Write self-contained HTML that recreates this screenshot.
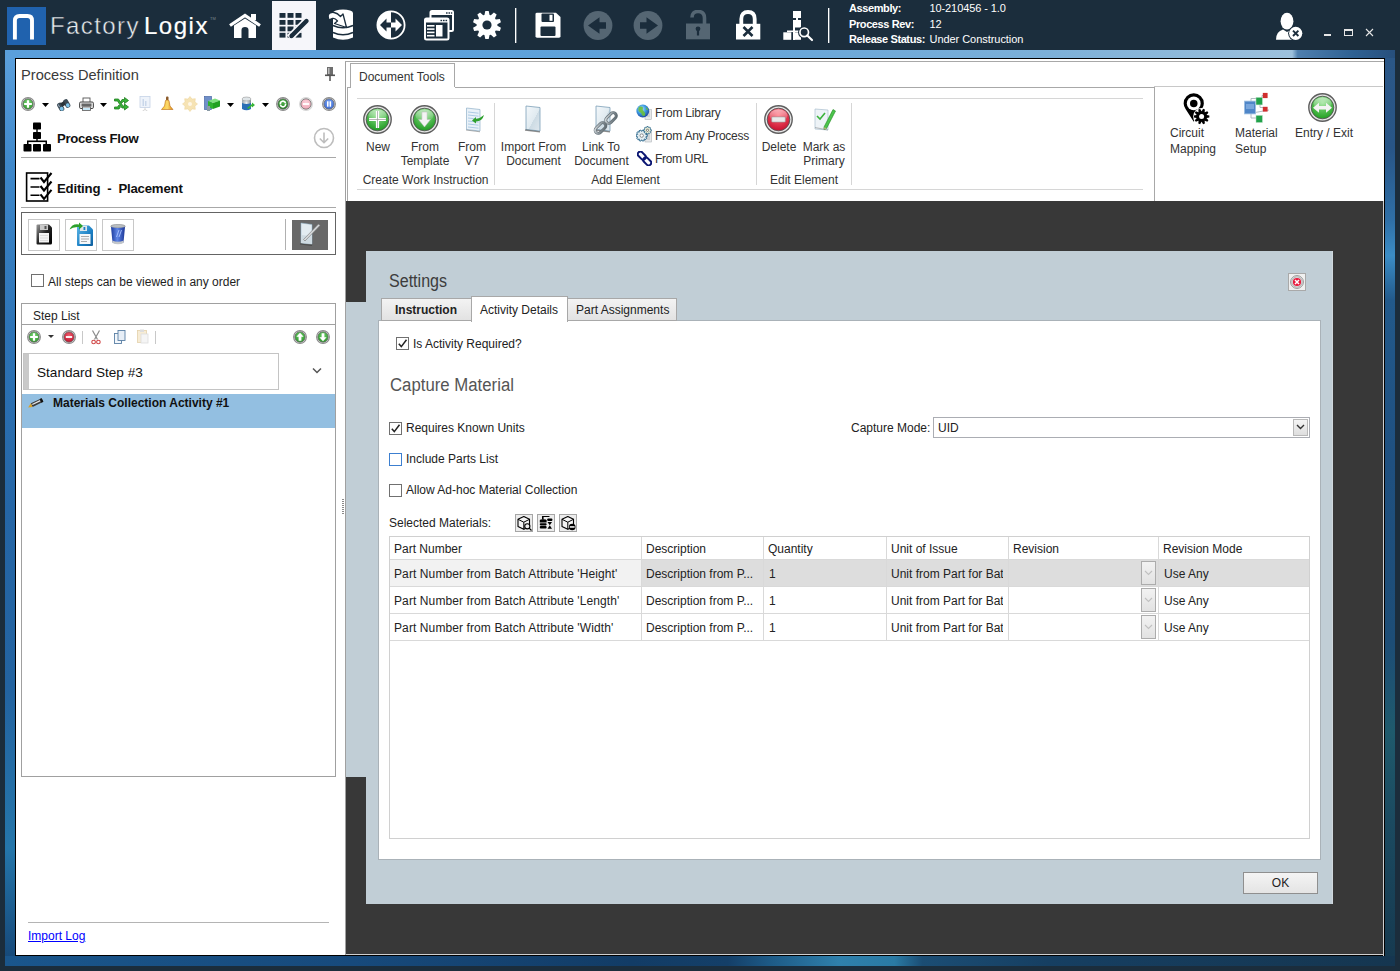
<!DOCTYPE html><html><head><meta charset="utf-8"><style>
*{box-sizing:border-box;margin:0;padding:0}
html,body{width:1400px;height:971px;overflow:hidden;background:#1b2d3c;font-family:"Liberation Sans",sans-serif;color:#000}
.a{position:absolute}
.t{position:absolute;white-space:nowrap;line-height:1}
#top{left:0;top:0;width:1400px;height:50px;background:#1b2d3c}
#frame{left:5px;top:50px;width:1390px;height:916px;background:linear-gradient(180deg,#5ba0dc 0%,#3f86c6 20%,#2a6aa6 50%,#1d5588 80%,#164676 100%)}
#win{left:15px;top:58px;width:1370px;height:898px;background:#fff;border:1px solid #000}
</style></head><body><div id="top" class="a">
  <div class="a" style="left:7px;top:7px;width:39px;height:38px;background:#2062ae"></div>
  <svg class="a" style="left:7px;top:7px" width="39" height="38" viewBox="0 0 39 38"><path d="M7.9 32.6 V13.5 Q7.9 9 12.5 9 H20.5 Q25 9 25 13.5 V32.6" fill="none" stroke="#fff" stroke-width="3.9"/></svg>
  <div class="t" style="left:50px;top:13.5px;font-size:24px;color:#e8ecee;letter-spacing:1.4px;-webkit-text-stroke:0.45px #1b2d3c">Factory</div><div class="t" style="left:144px;top:13.5px;font-size:24px;color:#fff;letter-spacing:1.5px;-webkit-text-stroke:0.2px #fff">Logix</div><div class="t" style="left:210px;top:17px;font-size:4px;color:#7c8890">TM</div>
  <div class="a" style="left:272px;top:1px;width:44px;height:49px;background:#f6f6fa"></div>
  <div class="a" style="left:515px;top:8px;width:1px;height:35px;background:#fff"></div><div class="a" style="left:516px;top:8px;width:1px;height:35px;background:rgba(255,255,255,0.35)"></div>
  <div class="a" style="left:828px;top:8px;width:1px;height:35px;background:#fff"></div><div class="a" style="left:829px;top:8px;width:1px;height:35px;background:rgba(255,255,255,0.35)"></div>
  <div class="t" style="left:849px;top:3px;font-size:11px;font-weight:bold;color:#fff;letter-spacing:-0.4px">Assembly:</div>
  <div class="t" style="left:849px;top:19px;font-size:11px;font-weight:bold;color:#fff;letter-spacing:-0.4px">Process Rev:</div>
  <div class="t" style="left:849px;top:34.3px;font-size:11px;font-weight:bold;color:#fff;letter-spacing:-0.4px">Release Status:</div>
  <div class="t" style="left:929.5px;top:3px;font-size:11px;color:#fff;letter-spacing:-0.1px">10-210456 - 1.0</div>
  <div class="t" style="left:929.5px;top:19px;font-size:11px;color:#fff">12</div>
  <div class="t" style="left:929.5px;top:34.3px;font-size:11px;color:#fff;letter-spacing:-0.05px">Under Construction</div>
</div>
<div id="frame" class="a"></div>
<div class="a" style="left:5px;top:50px;width:1390px;height:8px;background:linear-gradient(90deg,#5a9fdc 0%,#5fa2da 45%,#7cb0d8 75%,#94bcdb 88%,#9dc1dd 92.6%,#4f7fae 93%,#2f6192 97%,#274f7c 100%)"></div>
<div class="a" style="left:5px;top:58px;width:10px;height:898px;background:linear-gradient(180deg,#5a9fdc 0%,#3f88ca 12%,#2e74b6 30%,#2566a6 50%,#2363a0 70%,#2576aa 88%,#1e6396 93%,#174a7a 100%)"></div>
<div class="a" style="left:1385px;top:58px;width:10px;height:898px;background:linear-gradient(180deg,#2b5787 0%,#285586 10%,#2f6fa6 18%,#3b8dc6 22%,#22598a 27%,#1f5080 45%,#1d4d76 65%,#1f5a6c 75%,#1b4a60 85%,#163a50 100%)"></div>
<div class="a" style="left:5px;top:956px;width:1390px;height:10px;background:linear-gradient(90deg,#1a568c 0%,#174a7c 25%,#123c66 45%,#143f68 52%,#1d5a86 55%,#2f80ac 60%,#2a7aa4 64%,#1b4d74 66%,#163f62 75%,#153650 100%)"></div>
<div id="win" class="a"></div>
<svg class="a" style="left:228px;top:12px" width="34" height="28" viewBox="0 0 34 28"><path d="M2 13.5L17 3.5L32 13.5" fill="none" stroke="#ffffff" stroke-width="3.2" stroke-linejoin="miter"/><rect x="23" y="2" width="5" height="6" fill="#ffffff"/><path d="M6 13.5L17 6.5L28 13.5V26H20.5V18Q20.5 15 17 15Q13.5 15 13.5 18V26H6Z" fill="#ffffff"/></svg>
<svg class="a" style="left:276px;top:10px" width="36" height="32" viewBox="0 0 36 32"><rect x="3.5" y="3" width="6" height="4.8" fill="#1b2d3c"/><rect x="11.5" y="3" width="6" height="4.8" fill="#1b2d3c"/><rect x="19.5" y="3" width="6" height="4.8" fill="#1b2d3c"/><rect x="3.5" y="10" width="6" height="4.8" fill="#1b2d3c"/><rect x="11.5" y="10" width="6" height="4.8" fill="#1b2d3c"/><rect x="19.5" y="10" width="6" height="4.8" fill="#1b2d3c"/><rect x="3.5" y="16.5" width="6" height="4.8" fill="#1b2d3c"/><rect x="11.5" y="16.5" width="6" height="4.8" fill="#1b2d3c"/><rect x="19.5" y="16.5" width="6" height="4.8" fill="#1b2d3c"/><rect x="3.5" y="22.799999999999997" width="6" height="4.8" fill="#1b2d3c"/><rect x="11.5" y="22.799999999999997" width="6" height="4.8" fill="#1b2d3c"/><rect x="19.5" y="22.799999999999997" width="6" height="4.8" fill="#1b2d3c"/><path d="M13.5 28L31 10.5" stroke="#f6f6fa" stroke-width="7.5"/><path d="M15.5 26L30.5 11" stroke="#1b2d3c" stroke-width="4.4" stroke-linecap="round"/><path d="M13.8 28.2L14.8 23.5L18 26.7Z" fill="#1b2d3c"/></svg>
<svg class="a" style="left:327px;top:8px" width="30" height="34" viewBox="0 0 30 34"><path d="M6 5 A10 3.4 0 0 1 26 5 V29.5 Q16 34 6 29.5 Z" fill="#ffffff"/><path d="M6 17.5Q16 22 26 17.5M6 24.5Q16 29 26 24.5" fill="none" stroke="#1b2d3c" stroke-width="1.5"/><path d="M1.5 6.5Q3 4 7 4.5Q10.5 5 13.5 8.5L16 6L19.5 19.5L7.5 15.5L10.5 13Q8 10 5.5 10.5Q3 11 2.5 12.5Q0.5 9 1.5 6.5Z" fill="#ffffff" stroke="#1b2d3c" stroke-width="1.3" stroke-linejoin="round"/></svg>
<svg class="a" style="left:376px;top:10px" width="30" height="30" viewBox="0 0 30 30"><circle cx="15" cy="15" r="13.6" fill="#1b2d3c" stroke="#ffffff" stroke-width="1.8"/><path d="M15 1.4A13.6 13.6 0 0 0 15 28.6Z" fill="#ffffff"/><path d="M4 15L10.5 8.5V12.5H15V17.5H10.5V21.5Z" fill="#1b2d3c"/><path d="M26 15L19.5 8.5V12.5H15V17.5H19.5V21.5Z" fill="#ffffff"/></svg>
<svg class="a" style="left:422px;top:8px" width="34" height="34" viewBox="0 0 34 34"><rect x="8.5" y="3" width="22.5" height="20" rx="1.5" fill="#1b2d3c" stroke="#ffffff" stroke-width="2"/><rect x="8.5" y="3" width="22.5" height="4" fill="#ffffff"/><rect x="24" y="4.3" width="1.6" height="1.4" fill="#1b2d3c"/><rect x="26.5" y="4.3" width="1.6" height="1.4" fill="#1b2d3c"/><rect x="29" y="4.3" width="1.2" height="1.4" fill="#1b2d3c"/><rect x="3" y="10.5" width="23.5" height="21" rx="1.5" fill="#1b2d3c" stroke="#ffffff" stroke-width="2"/><rect x="3" y="10.5" width="23.5" height="4" fill="#ffffff"/><rect x="18.5" y="11.8" width="1.6" height="1.4" fill="#1b2d3c"/><rect x="21" y="11.8" width="1.6" height="1.4" fill="#1b2d3c"/><rect x="23.5" y="11.8" width="1.6" height="1.4" fill="#1b2d3c"/><rect x="5" y="17" width="7.5" height="1.6" fill="#ffffff"/><rect x="5" y="20.3" width="7.5" height="1.6" fill="#ffffff"/><rect x="5" y="23.6" width="7.5" height="1.6" fill="#ffffff"/><rect x="5" y="26.9" width="7.5" height="1.6" fill="#ffffff"/><rect x="14" y="17" width="6.5" height="11.5" fill="#ffffff"/></svg>
<svg class="a" style="left:472px;top:10px" width="30" height="30" viewBox="0 0 30 30"><polygon points="13.30,0.90 16.70,0.90 17.57,4.92 18.84,5.34 21.91,2.60 24.66,4.59 23.00,8.36 23.79,9.44 27.88,9.03 28.93,12.26 25.38,14.33 25.38,15.67 28.93,17.74 27.88,20.97 23.79,20.56 23.00,21.64 24.66,25.41 21.91,27.40 18.84,24.66 17.57,25.08 16.70,29.10 13.30,29.10 12.43,25.08 11.16,24.66 8.09,27.40 5.34,25.41 7.00,21.64 6.21,20.56 2.12,20.97 1.07,17.74 4.62,15.67 4.62,14.33 1.07,12.26 2.12,9.03 6.21,9.44 7.00,8.36 5.34,4.59 8.09,2.60 11.16,5.34 12.43,4.92" fill="#ffffff"/><circle cx="15" cy="15" r="4.6" fill="#1b2d3c"/></svg>
<svg class="a" style="left:535px;top:12px" width="27" height="27" viewBox="0 0 27 27"><path d="M0.5 2Q0.5 0.7 2 0.7H21L25.5 5V24.3Q25.5 25.7 24 25.7H2Q0.5 25.7 0.5 24.3Z" fill="#ffffff"/><rect x="6.5" y="1.5" width="12.5" height="8.5" rx="1" fill="#1b2d3c"/><rect x="14.5" y="2.8" width="3" height="6" fill="#ffffff"/><rect x="5.5" y="14.5" width="15" height="9.5" rx="1" fill="#1b2d3c"/></svg>
<svg class="a" style="left:583px;top:11px" width="30" height="30" viewBox="0 0 30 30"><circle cx="15" cy="14.5" r="14.4" fill="#556673"/><path d="M5 14.5L16.5 6.3V11.2H23V17.8H16.5V22.7Z" fill="#1b2d3c"/></svg>
<svg class="a" style="left:633px;top:11px" width="30" height="30" viewBox="0 0 30 30"><circle cx="15" cy="14.5" r="14.4" fill="#556673"/><path d="M25 14.5L13.5 6.3V11.2H7V17.8H13.5V22.7Z" fill="#1b2d3c"/></svg>
<svg class="a" style="left:685px;top:10px" width="27" height="31" viewBox="0 0 27 31"><path d="M7 7.5Q7 1.5 13 1.5Q19.5 1.5 19.5 8V14" fill="none" stroke="#556673" stroke-width="3.6"/><rect x="1" y="13.5" width="24" height="15.8" fill="#556673"/><circle cx="13" cy="18.8" r="2.4" fill="#1b2d3c"/><rect x="11.9" y="19" width="2.2" height="6.5" fill="#1b2d3c"/></svg>
<svg class="a" style="left:735px;top:10px" width="27" height="31" viewBox="0 0 27 31"><path d="M6.3 14V9Q6.3 2 13 2Q19.7 2 19.7 9V14" fill="none" stroke="#ffffff" stroke-width="3.8"/><rect x="1" y="13.8" width="24.3" height="15.7" fill="#ffffff"/><path d="M8.5 17L17.5 26M17.5 17L8.5 26" stroke="#1b2d3c" stroke-width="2.6"/></svg>
<svg class="a" style="left:782px;top:10px" width="32" height="32" viewBox="0 0 32 32"><rect x="11" y="1" width="8" height="7" fill="#ffffff"/><rect x="11" y="10" width="8" height="7.5" fill="#ffffff"/><rect x="14" y="7.5" width="2" height="3" fill="#ffffff"/><rect x="5" y="20.5" width="15" height="1.6" fill="#ffffff"/><rect x="1.3" y="22.3" width="8" height="7.5" fill="#ffffff"/><rect x="11" y="17" width="2" height="13" fill="#ffffff"/><rect x="11" y="22.3" width="8" height="7.5" fill="#ffffff"/><circle cx="22.2" cy="22.3" r="6.2" fill="#1b2d3c"/><circle cx="22.2" cy="22.3" r="4.3" fill="none" stroke="#ffffff" stroke-width="1.7"/><path d="M25.3 25.5L30 30" stroke="#ffffff" stroke-width="2.2" stroke-linecap="round"/></svg>
<svg class="a" style="left:1274px;top:12px" width="30" height="30" viewBox="0 0 30 30"><ellipse cx="13" cy="9.2" rx="6.4" ry="8.4" fill="#ffffff"/><path d="M2 27.8Q2 19.5 9 17.5L13 20L17 17.5Q24 19.5 24 27.8Z" fill="#ffffff"/><circle cx="21.7" cy="21.3" r="7.6" fill="#1b2d3c"/><circle cx="21.7" cy="21.3" r="6.6" fill="#ffffff"/><path d="M19 18.6L24.4 24M24.4 18.6L19 24" stroke="#1b2d3c" stroke-width="1.9"/></svg>
<div class="a" style="left:1324px;top:34px;width:7px;height:2px;background:#e6e6e6"></div>
<div class="a" style="left:1344px;top:29px;width:9px;height:7px;border:1px solid #e6e6e6;border-top-width:2px"></div>
<svg class="a" style="left:1365px;top:28px" width="9" height="9" viewBox="0 0 9 9"><path d="M1 1L8 8M8 1L1 8" stroke="#e6e6e6" stroke-width="1.1"/></svg>

<div class="t" style="left:21px;top:67.3px;font-size:15px;color:#3a3a3a;transform:scaleX(0.975);transform-origin:0 0">Process Definition</div>
<svg class="a" style="left:324px;top:66px" width="12" height="16" viewBox="0 0 12 16"><rect x="3" y="1" width="6" height="8" fill="#6e6e6e"/><rect x="4" y="2" width="1.5" height="6" fill="#bbb"/><rect x="1" y="8.5" width="10" height="1.6" fill="#555"/><rect x="5.3" y="10" width="1.4" height="5" fill="#444"/></svg>
<svg class="a" style="left:23px;top:122px" width="29" height="31" viewBox="0 0 29 31"><rect x="10" y="0.5" width="8" height="7" rx="0.8"/><rect x="10" y="10" width="8" height="7" rx="0.8"/><rect x="13.3" y="6" width="1.4" height="5"/><rect x="13.3" y="16" width="1.4" height="3"/><rect x="4" y="18.5" width="20" height="1.6"/><rect x="4" y="19" width="1.5" height="3"/><rect x="22.5" y="19" width="1.5" height="3"/><rect x="0.5" y="22" width="8" height="7.5" rx="0.8"/><rect x="10" y="22" width="8" height="7.5" rx="0.8"/><rect x="20" y="22" width="8" height="7.5" rx="0.8"/></svg>
<div class="t" style="left:57px;top:131.5px;font-size:13.2px;font-weight:bold;color:#111;letter-spacing:-0.3px">Process Flow</div>
<svg class="a" style="left:313px;top:127px" width="22" height="22" viewBox="0 0 22 22"><circle cx="11" cy="11" r="9.5" fill="none" stroke="#bdbdbd" stroke-width="1.6"/><path d="M11 5.5V15.5M6.8 11.5L11 15.7L15.2 11.5" fill="none" stroke="#bdbdbd" stroke-width="1.6"/></svg>
<div class="a" style="left:21px;top:157px;width:315px;height:1px;background:#a8a8a8"></div>
<svg class="a" style="left:25px;top:171px" width="29" height="32" viewBox="0 0 29 32"><rect x="1.6" y="2" width="21" height="28" fill="#fff" stroke="#000" stroke-width="1.6"/><path d="M5.5 7.6H14.5M5.5 16H14.5M5.5 24.3H14.5" stroke="#000" stroke-width="1.6"/><path d="M15.5 6.5L19 11L26.5 2M15.5 15L19 19.5L26.5 10.5M15.5 23.3L19 27.8L26.5 18.8" fill="none" stroke="#000" stroke-width="2.1"/></svg>
<div class="t" style="left:57px;top:182px;font-size:13.2px;font-weight:bold;color:#111;letter-spacing:-0.2px;word-spacing:3.5px">Editing - Placement</div>
<div class="a" style="left:21px;top:207px;width:315px;height:1px;background:#a8a8a8"></div>
<div class="a" style="left:21px;top:212px;width:315px;height:43px;border:1px solid #646464"></div>
<div class="a" style="left:28px;top:219px;width:32px;height:32px;border:1px solid #c8c8c8"></div>
<div class="a" style="left:65px;top:219px;width:32px;height:32px;border:1px solid #c8c8c8"></div>
<div class="a" style="left:102px;top:219px;width:32px;height:32px;border:1px solid #c8c8c8"></div>
<div class="a" style="left:285px;top:219px;width:1px;height:31px;background:#b0b0b0"></div>
<div class="a" style="left:292px;top:220px;width:36px;height:30px;background:#686868"></div>
<div class="a" style="left:31px;top:274px;width:13px;height:13px;border:1px solid #707070;background:#fff"></div>
<div class="t" style="left:48px;top:275.6px;font-size:12px;color:#1e1e1e">All steps can be viewed in any order</div>
<div class="a" style="left:21px;top:303px;width:315px;height:474px;border:1px solid #a0a0a0"></div>
<div class="t" style="left:33px;top:309.5px;font-size:12px;color:#1e1e1e">Step List</div>
<div class="a" style="left:22px;top:324px;width:313px;height:1px;background:#a0a0a0"></div>
<div class="a" style="left:23px;top:353px;width:256px;height:37px;border:1px solid #c4c4c4;background:#fff"></div>
<div class="a" style="left:24px;top:354px;width:5px;height:35px;background:#c9c9c9"></div>
<div class="t" style="left:37px;top:365.5px;font-size:13.6px;color:#111">Standard Step #3</div>
<svg class="a" style="left:312px;top:367px" width="10" height="8" viewBox="0 0 10 8"><path d="M1 1.5L5 5.5L9 1.5" fill="none" stroke="#555" stroke-width="1.5"/></svg>
<div class="a" style="left:22px;top:394px;width:313px;height:34px;background:#93bfe1"></div>
<svg class="a" style="left:27px;top:397px" width="18" height="13" viewBox="0 0 18 13"><path d="M3.85 6.3L14.65 1.2L16.35 4.8L5.55 9.9Z" fill="#3c3c3c"/><path d="M5 6.9L13 3.1L13.6 4.3L5.6 8.1Z" fill="#e6e6e6"/><path d="M12.7 2.1L14.65 1.2L16.35 4.8L14.4 5.7Z" fill="#111"/><path d="M3.85 6.3L5.55 9.9L1.1 10.6Z" fill="#d9a22a"/></svg>
<div class="t" style="left:53px;top:397px;font-size:12px;font-weight:bold;color:#111">Materials Collection Activity #1</div>
<div class="a" style="left:28px;top:922px;width:301px;height:1px;background:#b4b4b4"></div>
<div class="t" style="left:28px;top:930px;font-size:12px;color:#0000ff;text-decoration:underline">Import Log</div>
<div class="a" style="left:345px;top:61px;width:1px;height:894px;background:#a0a0a0"></div>

<svg class="a" style="left:21px;top:97px" width="14" height="14" viewBox="0 0 14 14"><defs><radialGradient id="g1" cx="50%" cy="35%" r="65%"><stop offset="0" stop-color="#7fd67a"/><stop offset="1" stop-color="#2f9a2a"/></radialGradient></defs>
<g><circle cx="7.0" cy="7.0" r="6.4" fill="#f4f4f4" stroke="#8a8a8a" stroke-width="1.1"/>
<circle cx="7.0" cy="7.0" r="5.18" fill="url(#g1)" stroke="#6b6b6b" stroke-width="0.8"/><path d="M3.1499999999999995 7.0H10.850000000000001M7.0 3.1499999999999995V10.850000000000001" stroke="#fff" stroke-width="2.20"/></g></svg>
<svg class="a" style="left:42px;top:103px" width="7" height="4" viewBox="0 0 7 4"><path d="M0 0H7L3.5 4Z" fill="#000"/></svg>
<svg class="a" style="left:56px;top:97px" width="15" height="14" viewBox="0 0 15 14"><g transform="rotate(-30 7 7)"><rect x="1" y="4" width="5" height="9" rx="2.2" fill="#3b4a55"/><rect x="8" y="4" width="5" height="9" rx="2.2" fill="#3b4a55"/><rect x="5" y="5" width="4" height="4" fill="#2a333a"/><ellipse cx="3.5" cy="10.5" rx="1.8" ry="2" fill="#7cc3ea"/><ellipse cx="10.5" cy="10.5" rx="1.8" ry="2" fill="#7cc3ea"/><rect x="2" y="5" width="1" height="3" fill="#9ab"/></g></svg>
<svg class="a" style="left:36px;top:224px" width="17" height="21" viewBox="0 0 17 21"><defs><linearGradient id="fdk" x1="0" x2="1" y1="0" y2="1"><stop offset="0" stop-color="#9a9a9a"/><stop offset="0.5" stop-color="#222"/><stop offset="1" stop-color="#000"/></linearGradient></defs><path d="M0.5 1.5Q0.5 0.5 1.5 0.5H13L16 3.5V19Q16 20.5 14.5 20.5H1.5Q0.5 20.5 0.5 19.5Z" fill="url(#fdk)"/><rect x="4" y="1" width="8" height="5" fill="#c9c9c9"/><rect x="8.5" y="2" width="2" height="3" fill="#555"/><rect x="3" y="9" width="10" height="9.5" fill="#f4f4f4"/><path d="M4 11.5H12M4 14H12M4 16.5H12" stroke="#ccc" stroke-width="0.6"/></svg>
<svg class="a" style="left:69px;top:222px" width="25" height="25" viewBox="0 0 25 25"><defs><linearGradient id="fbl" x1="0" x2="1" y1="0" y2="1"><stop offset="0" stop-color="#5fb7e6"/><stop offset="0.6" stop-color="#1b7fc4"/><stop offset="1" stop-color="#0f5e9c"/></linearGradient></defs><path d="M8 4.5Q8 3.5 9 3.5H20L24 7.5V23Q24 24 23 24H9Q8 24 8 23Z" fill="url(#fbl)"/><rect x="11" y="4" width="7" height="5" fill="#dfe6ea"/><rect x="14.5" y="5" width="1.8" height="3" fill="#1b7fc4"/><rect x="10.5" y="12" width="11" height="10" fill="#f6f8fa"/><path d="M12 14.5H20M12 17H20M12 19.5H18" stroke="#8a8a8a" stroke-width="0.7"/><path d="M0.5 7.5Q3 1.5 10 2.5V0.5L14 4L10 7.5V5Q4 4.5 0.5 7.5Z" fill="#2ca02c"/></svg>
<svg class="a" style="left:110px;top:224px" width="16" height="21" viewBox="0 0 16 21"><defs><linearGradient id="trg" x1="0" x2="1"><stop offset="0" stop-color="#1c3a9c"/><stop offset="0.45" stop-color="#5f86e6"/><stop offset="1" stop-color="#1a3596"/></linearGradient></defs><ellipse cx="8" cy="2.2" rx="7.3" ry="1.8" fill="#b9bdc0" stroke="#7d8185" stroke-width="0.6"/><path d="M1 3L2.5 18.5Q8 21 13.5 18.5L15 3Q8 5 1 3Z" fill="url(#trg)"/><path d="M2.3 16.5Q8 19 13.7 16.5L13.5 19Q8 21.5 2.5 19Z" fill="#c3c6c9"/><path d="M6.5 13L9 6M9 13L11.5 6" stroke="#a9c2ff" stroke-width="0.9"/></svg>
<svg class="a" style="left:298px;top:221px" width="24" height="26" viewBox="0 0 24 26"><path d="M3 2L14 3.5V23L3 22Z" fill="#e3ecf1" stroke="#8fb3c8" stroke-width="0.5"/><path d="M3 14L14 15V23L3 22Z" fill="#cfdbe2"/><path d="M2 23L14 24.5" stroke="#3a3a3a" stroke-width="1.2" opacity="0.6"/><path d="M5.5 18.5L20.5 3L22 4.5L7 20Z" fill="#d6d9db" stroke="#777" stroke-width="0.6"/></svg>
<svg class="a" style="left:79px;top:97px" width="15" height="14" viewBox="0 0 15 14"><rect x="4" y="1" width="7" height="5" fill="#fff" stroke="#555" stroke-width="0.9"/><rect x="0.6" y="5" width="13.8" height="6.5" rx="1.2" fill="#e8e8e8" stroke="#444" stroke-width="1"/><rect x="2.5" y="6.5" width="10" height="3" fill="#666"/><rect x="3.5" y="10" width="8" height="3.4" fill="#fff" stroke="#555" stroke-width="0.8"/><rect x="4" y="11.5" width="7" height="1" fill="#8fd0f0"/></svg>
<svg class="a" style="left:114px;top:96px" width="15" height="15" viewBox="0 0 15 15"><path d="M0.5 3H4.5L9 10H10.5V8L14.5 11L10.5 14V12H8L3.5 5H0.5Z" fill="#37b437" stroke="#1f7d1f" stroke-width="0.8"/><path d="M0.5 11H3.5L5 9L6.5 11L5 13H0.5Z" fill="#37b437" stroke="#1f7d1f" stroke-width="0.8"/><path d="M6.5 6L8 3.5H10.5V1.5L14.5 4.5L10.5 7.5V5.5H9L8 7Z" fill="#37b437" stroke="#1f7d1f" stroke-width="0.8"/></svg>
<svg class="a" style="left:139px;top:96px" width="12" height="15" viewBox="0 0 12 15"><rect x="1" y="0.5" width="10" height="11" fill="#eef3fa" stroke="#c5d3e6" stroke-width="0.8"/><rect x="3.5" y="3" width="1.5" height="7" fill="#c9d7ea"/><rect x="6" y="5" width="1.5" height="5" fill="#c9d7ea"/><path d="M6 11.5V13.5L3.5 15M6 13.5L8.5 15" stroke="#ccc" stroke-width="0.8" fill="none"/></svg>
<svg class="a" style="left:161px;top:96px" width="13" height="15" viewBox="0 0 13 15"><defs><linearGradient id="bellg" x1="0" x2="1"><stop offset="0" stop-color="#f9c02a"/><stop offset="0.5" stop-color="#fbd96b"/><stop offset="1" stop-color="#e08a12"/></linearGradient></defs><rect x="5" y="0.5" width="2.5" height="4" rx="1" fill="#8a5a2b"/><path d="M4.5 4.5Q6 3.5 8 4.5L9 10L12 13.5H0.5L3.5 10Z" fill="url(#bellg)" stroke="#b86a10" stroke-width="0.6"/></svg>
<svg class="a" style="left:182px;top:96px" width="16" height="16" viewBox="0 0 16 16"><polygon points="15.50,8.00 12.90,10.03 13.30,13.30 10.03,12.90 8.00,15.50 5.97,12.90 2.70,13.30 3.10,10.03 0.50,8.00 3.10,5.97 2.70,2.70 5.97,3.10 8.00,0.50 10.03,3.10 13.30,2.70 12.90,5.97" fill="#f6e3b4" stroke="#eed7a0" stroke-width="0.6" stroke-linejoin="round"/><circle cx="8" cy="8" r="2" fill="#fff7e6"/></svg>
<svg class="a" style="left:204px;top:96px" width="17" height="16" viewBox="0 0 17 16"><rect x="0.5" y="0.5" width="7" height="13" fill="#6f8fc8" stroke="#4b6aa5" stroke-width="0.7"/><path d="M4 5L11 2.5L16 4.5L9 7Z" fill="#7fe07f"/><path d="M4 5L9 7V13L4 11Z" fill="#2fb22f"/><path d="M9 7L16 4.5V10.5L9 13Z" fill="#21a121"/><rect x="3" y="10" width="3" height="5" fill="#8a9aa5"/></svg>
<svg class="a" style="left:241px;top:96px" width="15" height="16" viewBox="0 0 15 16"><defs><linearGradient id="dbg" x1="0" x2="1"><stop offset="0" stop-color="#9ba6ad"/><stop offset="0.5" stop-color="#e9eef1"/><stop offset="1" stop-color="#7d878d"/></linearGradient></defs><path d="M1 3V13Q5.5 15.5 10 13V3" fill="#2a6fb5"/><path d="M1 3V7Q5.5 9 10 7V3" fill="url(#dbg)"/><ellipse cx="5.5" cy="3" rx="4.5" ry="2" fill="#dfe5e8" stroke="#888" stroke-width="0.5"/><path d="M6 12L11 8V6.5L14 9L11 11.5V10L7.5 13Z" fill="#37b437"/></svg>
<svg class="a" style="left:100px;top:103px" width="7" height="4" viewBox="0 0 7 4"><path d="M0 0H7L3.5 4Z" fill="#000"/></svg>
<svg class="a" style="left:227px;top:103px" width="7" height="4" viewBox="0 0 7 4"><path d="M0 0H7L3.5 4Z" fill="#000"/></svg>
<svg class="a" style="left:262px;top:103px" width="7" height="4" viewBox="0 0 7 4"><path d="M0 0H7L3.5 4Z" fill="#000"/></svg>
<svg class="a" style="left:276px;top:97px" width="14" height="14" viewBox="0 0 14 14"><defs><radialGradient id="g2" cx="50%" cy="35%" r="65%"><stop offset="0" stop-color="#4fb24a"/><stop offset="1" stop-color="#1f7a1f"/></radialGradient></defs>
<g><circle cx="7.0" cy="7.0" r="6.4" fill="#f4f4f4" stroke="#8a8a8a" stroke-width="1.1"/>
<circle cx="7.0" cy="7.0" r="5.18" fill="url(#g2)" stroke="#6b6b6b" stroke-width="0.8"/><path d="M4.5 7.5A2.6 2.6 0 0 1 9.5 6M9.5 6.5A2.6 2.6 0 0 1 4.5 8" fill="none" stroke="#fff" stroke-width="1.6"/></g></svg>
<svg class="a" style="left:299px;top:97px" width="14" height="14" viewBox="0 0 14 14"><defs><radialGradient id="g3" cx="50%" cy="35%" r="65%"><stop offset="0" stop-color="#f9d0d9"/><stop offset="1" stop-color="#f0a9b8"/></radialGradient></defs>
<g><circle cx="7.0" cy="7.0" r="6.4" fill="#f4f4f4" stroke="#d6d6d6" stroke-width="1.1"/>
<circle cx="7.0" cy="7.0" r="5.18" fill="url(#g3)" stroke="#6b6b6b" stroke-width="0.8"/><rect x="3.85" y="6.09" width="6.3" height="1.82" fill="#fff"/></g></svg>
<svg class="a" style="left:322px;top:97px" width="14" height="14" viewBox="0 0 14 14"><defs><radialGradient id="g4" cx="50%" cy="35%" r="65%"><stop offset="0" stop-color="#7aa3f0"/><stop offset="1" stop-color="#3c6bd6"/></radialGradient></defs>
<g><circle cx="7.0" cy="7.0" r="6.4" fill="#f4f4f4" stroke="#8a8a8a" stroke-width="1.1"/>
<circle cx="7.0" cy="7.0" r="5.18" fill="url(#g4)" stroke="#6b6b6b" stroke-width="0.8"/><rect x="5" y="4.3" width="1.5" height="5.4" fill="#fff"/><rect x="7.6" y="4.3" width="1.5" height="5.4" fill="#fff"/></g></svg>
<svg class="a" style="left:27px;top:330px" width="14" height="14" viewBox="0 0 14 14"><defs><radialGradient id="g5" cx="50%" cy="35%" r="65%"><stop offset="0" stop-color="#7fd67a"/><stop offset="1" stop-color="#2f9a2a"/></radialGradient></defs>
<g><circle cx="7.0" cy="7.0" r="6.4" fill="#f4f4f4" stroke="#8a8a8a" stroke-width="1.1"/>
<circle cx="7.0" cy="7.0" r="5.18" fill="url(#g5)" stroke="#6b6b6b" stroke-width="0.8"/><path d="M3.1499999999999995 7.0H10.850000000000001M7.0 3.1499999999999995V10.850000000000001" stroke="#fff" stroke-width="2.20"/></g></svg>
<svg class="a" style="left:48px;top:335px" width="6" height="3" viewBox="0 0 6 3"><path d="M0 0H6L3 3Z" fill="#333"/></svg>
<svg class="a" style="left:62px;top:330px" width="14" height="14" viewBox="0 0 14 14"><defs><radialGradient id="g6" cx="50%" cy="35%" r="65%"><stop offset="0" stop-color="#f06070"/><stop offset="1" stop-color="#c0102a"/></radialGradient></defs>
<g><circle cx="7.0" cy="7.0" r="6.4" fill="#f4f4f4" stroke="#8a8a8a" stroke-width="1.1"/>
<circle cx="7.0" cy="7.0" r="5.18" fill="url(#g6)" stroke="#6b6b6b" stroke-width="0.8"/><rect x="3.85" y="6.09" width="6.3" height="1.82" fill="#fff"/></g></svg>
<div class="a" style="left:82px;top:331px;width:1px;height:13px;background:#c8c8c8"></div>
<svg class="a" style="left:90px;top:330px" width="12" height="15" viewBox="0 0 12 15"><path d="M2.5 0.5L7.5 9.5M9.5 0.5L4.5 9.5" stroke="#8a8a8a" stroke-width="1.2"/><circle cx="3.6" cy="12" r="1.8" fill="none" stroke="#d04545" stroke-width="1.1"/><circle cx="8.4" cy="12" r="1.8" fill="none" stroke="#d04545" stroke-width="1.1"/></svg>
<svg class="a" style="left:114px;top:330px" width="12" height="14" viewBox="0 0 12 14"><g opacity="1"><rect x="0.5" y="3.5" width="7" height="10" fill="#f3f7fb" stroke="#5a7fa5" stroke-width="0.9"/><rect x="4" y="0.5" width="7" height="10" fill="#e7eef6" stroke="#5a7fa5" stroke-width="0.9"/></g></svg>
<svg class="a" style="left:137px;top:329px" width="12" height="15" viewBox="0 0 12 15"><rect x="0.5" y="1.5" width="9" height="12" fill="#f7ecd5" stroke="#e3d2ab" stroke-width="0.8"/><rect x="3" y="0.5" width="4" height="2.5" fill="#ddd"/><rect x="4" y="5" width="7" height="9" fill="#f5f5f5" stroke="#ddd" stroke-width="0.8"/></svg>
<div class="a" style="left:155px;top:331px;width:1px;height:13px;background:#c8c8c8"></div>
<svg class="a" style="left:293px;top:330px" width="14" height="14" viewBox="0 0 14 14"><defs><radialGradient id="g7" cx="50%" cy="35%" r="65%"><stop offset="0" stop-color="#6fcf6a"/><stop offset="1" stop-color="#2a962a"/></radialGradient></defs>
<g><circle cx="7.0" cy="7.0" r="6.4" fill="#f4f4f4" stroke="#8a8a8a" stroke-width="1.1"/>
<circle cx="7.0" cy="7.0" r="5.18" fill="url(#g7)" stroke="#6b6b6b" stroke-width="0.8"/><path d="M7.0 2.8L10.6 6.8H8.4V10.8H5.6V6.8H3.4Z" fill="#fff"/></g></svg>
<svg class="a" style="left:316px;top:330px" width="14" height="14" viewBox="0 0 14 14"><defs><radialGradient id="g8" cx="50%" cy="35%" r="65%"><stop offset="0" stop-color="#6fcf6a"/><stop offset="1" stop-color="#2a962a"/></radialGradient></defs>
<g><circle cx="7.0" cy="7.0" r="6.4" fill="#f4f4f4" stroke="#8a8a8a" stroke-width="1.1"/>
<circle cx="7.0" cy="7.0" r="5.18" fill="url(#g8)" stroke="#6b6b6b" stroke-width="0.8"/><path d="M7.0 11.2L10.6 7.2H8.4V3.2H5.6V7.2H3.4Z" fill="#fff"/></g></svg>
<div class="a" style="left:345px;top:61px;width:1039px;height:1px;background:#a8a8a8"></div>
<div class="a" style="left:350px;top:63px;width:105px;height:25px;border:1px solid #a8a8a8;border-bottom:none;background:#fff"></div>
<div class="t" style="left:359px;top:71px;font-size:12px;color:#333">Document Tools</div>
<div class="a" style="left:347px;top:87px;width:808px;height:114px;border:1px solid #a8a8a8;border-right:1px solid #a8a8a8;border-bottom:none"></div>
<div class="a" style="left:351px;top:87px;width:104px;height:1px;background:#fff"></div>
<div class="a" style="left:1154px;top:86px;width:229px;height:1px;background:#c8c8c8"></div>
<div class="a" style="left:357px;top:98px;width:786px;height:1px;background:#d6d6d6"></div>
<div class="a" style="left:357px;top:189px;width:786px;height:1px;background:#d6d6d6"></div>
<div class="a" style="left:494px;top:103px;width:1px;height:82px;background:#d6d6d6"></div>
<div class="a" style="left:756px;top:103px;width:1px;height:82px;background:#d6d6d6"></div>
<div class="a" style="left:851px;top:103px;width:1px;height:82px;background:#d6d6d6"></div>
<svg class="a" style="left:363px;top:105px" width="29" height="29" viewBox="0 0 29 29"><defs><radialGradient id="g9" cx="50%" cy="30%" r="70%"><stop offset="0" stop-color="#8ee08a"/><stop offset="1" stop-color="#1f9a22"/></radialGradient>
<linearGradient id="g10" x1="0" y1="0" x2="0" y2="1"><stop offset="0" stop-color="#fff" stop-opacity="0.55"/><stop offset="1" stop-color="#fff" stop-opacity="0"/></linearGradient></defs>
<circle cx="14.5" cy="14.5" r="13.7" fill="#e6e6e6" stroke="#5e5e5e" stroke-width="1.4"/>
<circle cx="14.5" cy="14.5" r="11.3" fill="url(#g9)" stroke="#555" stroke-width="0.9"/>
<ellipse cx="14.5" cy="10.44" rx="8.99" ry="6.09" fill="url(#g10)"/><path d="M6.09 14.5H22.91M14.5 6.09V22.91" stroke="#fff" stroke-width="3.2"/><path d="M6.09 14.5H22.91M14.5 6.09V22.91" stroke="#9a9a9a" stroke-width="0.7"/></svg>
<svg class="a" style="left:410px;top:105px" width="29" height="29" viewBox="0 0 29 29"><defs><radialGradient id="g11" cx="50%" cy="30%" r="70%"><stop offset="0" stop-color="#8ee08a"/><stop offset="1" stop-color="#1f9a22"/></radialGradient>
<linearGradient id="g12" x1="0" y1="0" x2="0" y2="1"><stop offset="0" stop-color="#fff" stop-opacity="0.55"/><stop offset="1" stop-color="#fff" stop-opacity="0"/></linearGradient></defs>
<circle cx="14.5" cy="14.5" r="13.7" fill="#e6e6e6" stroke="#5e5e5e" stroke-width="1.4"/>
<circle cx="14.5" cy="14.5" r="11.3" fill="url(#g11)" stroke="#555" stroke-width="0.9"/>
<ellipse cx="14.5" cy="10.44" rx="8.99" ry="6.09" fill="url(#g12)"/><path d="M11.9 7.0H17.1V14.5H20.5L14.5 22.0L8.5 14.5H11.9Z" fill="#f4f4f4" stroke="#bbb" stroke-width="0.5"/></svg>
<svg class="a" style="left:465px;top:107px" width="20" height="26" viewBox="0 0 20 26"><path d="M1.5 1L15 2.5V24L1.5 22.5Z" fill="#e9f1f8" stroke="#8fb0c8" stroke-width="0.7"/><path d="M3 5L13.5 6.2M3 8L13.5 9.2M3 11L13.5 12.2M3 14L13.5 15.2M3 17L13.5 18.2M3 20L13.5 21.2" stroke="#9dc0de" stroke-width="0.8"/><path d="M1 23L15 24.8" stroke="#444" stroke-width="1" opacity="0.4"/><path d="M7 13.5L11 10V12Q15 11.5 19 8Q17.5 14 11 14.5V16.5Z" fill="#2ea12e"/></svg>
<div class="t" style="left:318.0px;width:120px;text-align:center;top:141px;font-size:12px;color:#333">New</div>
<div class="t" style="left:365.0px;width:120px;text-align:center;top:141px;font-size:12px;color:#333">From</div>
<div class="t" style="left:365.0px;width:120px;text-align:center;top:155px;font-size:12px;color:#333">Template</div>
<div class="t" style="left:412.0px;width:120px;text-align:center;top:141px;font-size:12px;color:#333">From</div>
<div class="t" style="left:412.0px;width:120px;text-align:center;top:155px;font-size:12px;color:#333">V7</div>
<div class="t" style="left:355.6px;width:140px;text-align:center;top:174px;font-size:12px;color:#333">Create Work Instruction</div>
<svg class="a" style="left:524px;top:105px" width="18" height="28" viewBox="0 0 18 28"><defs><linearGradient id="g13" x1="0" y1="0" x2="1" y2="1"><stop offset="0" stop-color="#f4f8fb"/><stop offset="0.55" stop-color="#e0eaf0"/><stop offset="0.56" stop-color="#cddbe4"/><stop offset="1" stop-color="#dfe8ee"/></linearGradient></defs>
<path d="M2 1L16 2.5V26L2 24.5Z" fill="url(#g13)" stroke="#7c9fb8" stroke-width="0.8"/><path d="M1 25L16 26.8" stroke="#333" stroke-width="1.3" opacity="0.55"/></svg>
<svg class="a" style="left:594px;top:105px" width="18" height="28" viewBox="0 0 18 28"><defs><linearGradient id="g14" x1="0" y1="0" x2="1" y2="1"><stop offset="0" stop-color="#f4f8fb"/><stop offset="0.55" stop-color="#e0eaf0"/><stop offset="0.56" stop-color="#cddbe4"/><stop offset="1" stop-color="#dfe8ee"/></linearGradient></defs>
<path d="M2 1L16 2.5V26L2 24.5Z" fill="url(#g14)" stroke="#7c9fb8" stroke-width="0.8"/><path d="M1 25L16 26.8" stroke="#333" stroke-width="1.3" opacity="0.55"/></svg>
<svg class="a" style="left:592px;top:110px" width="28" height="28" viewBox="0 0 28 28"><defs><linearGradient id="chg" x1="0" y1="0" x2="1" y2="1"><stop offset="0" stop-color="#d9dde0"/><stop offset="0.5" stop-color="#8a949a"/><stop offset="1" stop-color="#5d676d"/></linearGradient></defs>
<g transform="translate(8.5 18) rotate(-45)"><rect x="-6.2" y="-3.1" width="12.4" height="6.2" rx="3.1" fill="none" stroke="#66737a" stroke-width="3"/><rect x="-6.2" y="-3.1" width="12.4" height="6.2" rx="3.1" fill="none" stroke="url(#chg)" stroke-width="1.6"/></g>
<g transform="translate(19 8) rotate(-45)"><rect x="-6.2" y="-3.1" width="12.4" height="6.2" rx="3.1" fill="none" stroke="#66737a" stroke-width="3"/><rect x="-6.2" y="-3.1" width="12.4" height="6.2" rx="3.1" fill="none" stroke="url(#chg)" stroke-width="1.6"/></g></svg>
<div class="t" style="left:473.5px;width:120px;text-align:center;top:141px;font-size:12px;color:#333">Import From</div>
<div class="t" style="left:473.5px;width:120px;text-align:center;top:155px;font-size:12px;color:#333">Document</div>
<div class="t" style="left:541.0px;width:120px;text-align:center;top:141px;font-size:12px;color:#333">Link To</div>
<div class="t" style="left:541.5px;width:120px;text-align:center;top:155px;font-size:12px;color:#333">Document</div>
<svg class="a" style="left:636px;top:104px" width="17" height="17" viewBox="0 0 17 17"><defs><radialGradient id="glg" cx="40%" cy="35%" r="70%"><stop offset="0" stop-color="#bfe6ff"/><stop offset="0.5" stop-color="#3c9be0"/><stop offset="1" stop-color="#1d3f9a"/></radialGradient></defs><rect x="9" y="5.5" width="6.5" height="10" fill="#e6e8ea" stroke="#b0b4b8" stroke-width="0.6"/><path d="M10.5 8H14M10.5 10H14M10.5 12H14" stroke="#9a9ea2" stroke-width="0.6"/><circle cx="6.8" cy="7" r="6.4" fill="url(#glg)"/><path d="M3 2.8Q5.5 1.8 7 3.5Q6 6 8 7.5Q10 9 9 11.5Q7.5 12.5 6 11Q5.5 8.5 3.5 8Q1.5 6 3 2.8Z" fill="#6cbf3a" opacity="0.9"/><path d="M10 3Q12 4.5 12.5 6.5Q11 6 10 4.5Z" fill="#6cbf3a"/></svg>
<svg class="a" style="left:636px;top:126px" width="17" height="17" viewBox="0 0 17 17"><rect x="9" y="5.5" width="6.5" height="10.5" fill="#e6e8ea" stroke="#b0b4b8" stroke-width="0.6"/><path d="M10.5 9H14M10.5 11H14M10.5 13H14" stroke="#9a9ea2" stroke-width="0.6"/><polygon points="11.23,8.71 11.23,10.49 9.71,10.84 9.68,10.95 10.70,12.13 9.65,13.57 8.22,12.96 8.12,13.03 8.26,14.58 6.56,15.13 5.76,13.80 5.64,13.80 4.84,15.13 3.14,14.58 3.28,13.03 3.18,12.96 1.75,13.57 0.70,12.13 1.72,10.95 1.69,10.84 0.17,10.49 0.17,8.71 1.69,8.36 1.72,8.25 0.70,7.07 1.75,5.63 3.18,6.24 3.28,6.17 3.14,4.62 4.84,4.07 5.64,5.40 5.76,5.40 6.56,4.07 8.26,4.62 8.12,6.17 8.22,6.24 9.65,5.63 10.70,7.07 9.68,8.25 9.71,8.36" fill="#e4eef2" stroke="#1f5f86" stroke-width="0.9"/><circle cx="5.7" cy="9.6" r="1.7" fill="#fff" stroke="#555" stroke-width="0.6"/><polygon points="15.35,3.68 15.35,4.92 14.27,5.16 14.07,5.65 14.66,6.58 13.78,7.46 12.85,6.87 12.36,7.07 12.12,8.15 10.88,8.15 10.64,7.07 10.15,6.87 9.22,7.46 8.34,6.58 8.93,5.65 8.73,5.16 7.65,4.92 7.65,3.68 8.73,3.44 8.93,2.95 8.34,2.02 9.22,1.14 10.15,1.73 10.64,1.53 10.88,0.45 12.12,0.45 12.36,1.53 12.85,1.73 13.78,1.14 14.66,2.02 14.07,2.95 14.27,3.44" fill="#eef0d8" stroke="#1f5f86" stroke-width="0.8"/><circle cx="11.5" cy="4.3" r="1.1" fill="#fff" stroke="#333" stroke-width="0.6"/></svg>
<svg class="a" style="left:637px;top:151px" width="15" height="15" viewBox="0 0 15 15"><g transform="translate(4.8 4.6) rotate(45)"><rect x="-4.6" y="-2.6" width="9.2" height="5.2" rx="2.6" fill="none" stroke="#0c1773" stroke-width="2"/></g><g transform="translate(10.2 10.4) rotate(45)"><rect x="-4.6" y="-2.6" width="9.2" height="5.2" rx="2.6" fill="none" stroke="#0c1773" stroke-width="2"/></g></svg>
<div class="t" style="left:655px;top:107px;font-size:12px;color:#333;letter-spacing:-0.2px">From Library</div>
<div class="t" style="left:655px;top:130px;font-size:12px;color:#333;letter-spacing:-0.25px">From Any Process</div>
<div class="t" style="left:655px;top:153px;font-size:12px;color:#333;letter-spacing:-0.3px">From URL</div>
<div class="t" style="left:565.5px;width:120px;text-align:center;top:174px;font-size:12px;color:#333">Add Element</div>
<svg class="a" style="left:764px;top:105px" width="29" height="29" viewBox="0 0 29 29"><defs><radialGradient id="g15" cx="50%" cy="30%" r="70%"><stop offset="0" stop-color="#ff6a78"/><stop offset="1" stop-color="#c8102e"/></radialGradient>
<linearGradient id="g16" x1="0" y1="0" x2="0" y2="1"><stop offset="0" stop-color="#fff" stop-opacity="0.55"/><stop offset="1" stop-color="#fff" stop-opacity="0"/></linearGradient></defs>
<circle cx="14.5" cy="14.5" r="13.7" fill="#e6e6e6" stroke="#5e5e5e" stroke-width="1.4"/>
<circle cx="14.5" cy="14.5" r="11.3" fill="url(#g15)" stroke="#555" stroke-width="0.9"/>
<ellipse cx="14.5" cy="10.44" rx="8.99" ry="6.09" fill="url(#g16)"/><rect x="7.7" y="11.9" width="13.6" height="5.2" rx="0.8" fill="#e9e9e9" stroke="#999" stroke-width="0.6"/></svg>
<svg class="a" style="left:813px;top:107px" width="23" height="25" viewBox="0 0 23 25"><path d="M2 2L15 3V23L2 22Z" fill="#eef3f7" stroke="#a9bfce" stroke-width="0.7"/><path d="M2 20.5L15 23" stroke="#666" stroke-width="0.8" opacity="0.5"/><path d="M4 9L7 12L12 6" fill="none" stroke="#3cb43c" stroke-width="1.6"/><path d="M11 20L20 2.5L22.5 4L13.5 21.5L11 22.5Z" fill="#4cc44c" stroke="#1f8a1f" stroke-width="0.6"/><path d="M11 22.5L11.5 20L13.5 21.5Z" fill="#ccb080"/></svg>
<div class="t" style="left:719.0px;width:120px;text-align:center;top:141px;font-size:12px;color:#333">Delete</div>
<div class="t" style="left:764.0px;width:120px;text-align:center;top:141px;font-size:12px;color:#333">Mark as</div>
<div class="t" style="left:764.0px;width:120px;text-align:center;top:155px;font-size:12px;color:#333">Primary</div>
<div class="t" style="left:744.0px;width:120px;text-align:center;top:174px;font-size:12px;color:#333">Edit Element</div>
<svg class="a" style="left:1183px;top:93px" width="28" height="32" viewBox="0 0 28 32"><path d="M10.75 28.8L2.5500000000000007 16Q0.6500000000000004 13 0.6500000000000004 10.4A10.1 10.1 0 0 1 20.85 10.4Q20.85 13 18.95 16Z" fill="#000"/><circle cx="10.75" cy="10.4" r="6.9" fill="#fff"/><circle cx="10.75" cy="10.4" r="3.75" fill="#000"/><circle cx="18.6" cy="23.5" r="8.5" fill="#fff"/><polygon points="26.34,22.57 26.34,24.43 23.66,25.07 23.62,25.21 25.41,27.30 24.32,28.81 21.78,27.74 21.65,27.83 21.88,30.58 20.10,31.15 18.68,28.80 18.52,28.80 17.10,31.15 15.32,30.58 15.55,27.83 15.42,27.74 12.88,28.81 11.79,27.30 13.58,25.21 13.54,25.07 10.86,24.43 10.86,22.57 13.54,21.93 13.58,21.79 11.79,19.70 12.88,18.19 15.42,19.26 15.55,19.17 15.32,16.42 17.10,15.85 18.52,18.20 18.68,18.20 20.10,15.85 21.88,16.42 21.65,19.17 21.78,19.26 24.32,18.19 25.41,19.70 23.62,21.79 23.66,21.93" fill="#000"/><circle cx="18.6" cy="23.5" r="2.5" fill="#fff"/></svg>
<svg class="a" style="left:1243px;top:92px" width="29" height="32" viewBox="0 0 29 32"><path d="M8 9V6.5H14M19 6V3.5H21.5M17 10V15.5H21M8 21V26H14M12 20.5L26 18" fill="none" stroke="#a9b4bb" stroke-width="0.9"/><rect x="1.4" y="9.1" width="11.2" height="12.8" fill="#4f86c8" stroke="#9fc0e0" stroke-width="0.8"/><rect x="3" y="12" width="8" height="5" fill="#79a6dc"/><rect x="13" y="5.4" width="6.4" height="7.5" fill="#22a24a" stroke="#b9e0c6" stroke-width="0.5"/><rect x="13" y="23.4" width="6.4" height="7.1" fill="#22a24a" stroke="#b9e0c6" stroke-width="0.5"/><rect x="19.8" y="0.9" width="4.8" height="5.2" fill="#d02e2e"/><rect x="19.8" y="14.8" width="4.8" height="4.8" fill="#d02e2e"/></svg>
<svg class="a" style="left:1308px;top:93px" width="29" height="29" viewBox="0 0 29 29"><defs><radialGradient id="g17" cx="50%" cy="30%" r="70%"><stop offset="0" stop-color="#8ee08a"/><stop offset="1" stop-color="#22a022"/></radialGradient>
<linearGradient id="g18" x1="0" y1="0" x2="0" y2="1"><stop offset="0" stop-color="#fff" stop-opacity="0.55"/><stop offset="1" stop-color="#fff" stop-opacity="0"/></linearGradient></defs>
<circle cx="14.5" cy="14.5" r="13.7" fill="#e6e6e6" stroke="#5e5e5e" stroke-width="1.4"/>
<circle cx="14.5" cy="14.5" r="11.3" fill="url(#g17)" stroke="#555" stroke-width="0.9"/>
<ellipse cx="14.5" cy="10.44" rx="8.99" ry="6.09" fill="url(#g18)"/><path d="M5.0 14.8L11.0 9.7V12.9H18.0V9.7L24.0 14.8L18.0 19.8V16.6H11.0V19.8Z" fill="#f4f4f4"/></svg>
<div class="t" style="left:1170px;top:127px;font-size:12px;color:#333">Circuit</div>
<div class="t" style="left:1170px;top:143px;font-size:12px;color:#333">Mapping</div>
<div class="t" style="left:1235px;top:127px;font-size:12px;color:#333">Material</div>
<div class="t" style="left:1235px;top:143px;font-size:12px;color:#333">Setup</div>
<div class="t" style="left:1295px;top:127px;font-size:12px;color:#333">Entry / Exit</div>
<div class="a" style="left:346px;top:201px;width:1037px;height:754px;background:#383838"></div>
<div class="a" style="left:346px;top:302px;width:20px;height:475px;background:#c1ced6"></div>
<div class="a" style="left:1383px;top:201px;width:1px;height:755px;background:#cfcfcf"></div>
<div class="a" style="left:346px;top:954px;width:1038px;height:1px;background:#cfcfcf"></div>
<div class="a" style="left:366px;top:251px;width:967px;height:653px;background:#c1ced6"></div>
<div class="t" style="left:389px;top:271.8px;font-size:18px;color:#3c3c3c;transform:scaleX(0.892);transform-origin:0 0">Settings</div>
<div class="a" style="left:1288px;top:273px;width:18px;height:18px;border:1px solid #a9a9a9;background:#f0f0f0"></div>
<svg class="a" style="left:1289px;top:274px" width="16" height="16" viewBox="0 0 16 16"><circle cx="8" cy="8" r="6.4" fill="#eee" stroke="#8a8a8a" stroke-width="0.9"/><circle cx="8" cy="8" r="5.1" fill="none" stroke="#9a9a9a" stroke-width="0.7"/><circle cx="8" cy="8" r="4.1" fill="#e8193c"/><path d="M6 6L10 10M10 6L6 10" stroke="#fff" stroke-width="1.5"/></svg>
<div class="a" style="left:378px;top:320px;width:943px;height:540px;border:1px solid #aab2b8;background:#fff"></div>
<div class="a" style="left:381px;top:298px;width:91px;height:23px;border:1px solid #a8a8a8;background:linear-gradient(#f3f3f3,#e2e2e2)"></div>
<div class="a" style="left:567px;top:298px;width:110px;height:23px;border:1px solid #a8a8a8;background:linear-gradient(#f3f3f3,#e2e2e2)"></div>
<div class="a" style="left:471px;top:296px;width:97px;height:26px;border:1px solid #a8a8a8;border-bottom:none;background:#fff"></div>
<div class="t" style="left:395px;top:304px;font-size:12px;font-weight:bold;color:#222">Instruction</div>
<div class="t" style="left:480px;top:304px;font-size:12px;color:#222">Activity Details</div>
<div class="t" style="left:576px;top:304px;font-size:12px;color:#222">Part Assignments</div>
<div class="a" style="left:396px;top:337px;width:13px;height:13px;border:1px solid #707070;background:#fff"></div><svg class="a" style="left:397px;top:338px" width="11" height="11" viewBox="0 0 11 11"><path d="M1.8 5.8L4.3 8.6L9.5 1.8" fill="none" stroke="#222" stroke-width="1.5"/></svg>
<div class="t" style="left:413px;top:338px;font-size:12px;color:#222">Is Activity Required?</div>
<div class="t" style="left:389.5px;top:376.9px;font-size:17.6px;color:#555;transform:scaleX(0.953);transform-origin:0 0">Capture Material</div>
<div class="a" style="left:389px;top:422px;width:13px;height:13px;border:1px solid #707070;background:#fff"></div><svg class="a" style="left:390px;top:423px" width="11" height="11" viewBox="0 0 11 11"><path d="M1.8 5.8L4.3 8.6L9.5 1.8" fill="none" stroke="#222" stroke-width="1.5"/></svg>
<div class="t" style="left:406px;top:422px;font-size:12px;color:#222">Requires Known Units</div>
<div class="a" style="left:389px;top:453px;width:13px;height:13px;border:1px solid #3c7fd0;background:#fff"></div>
<div class="t" style="left:406px;top:453px;font-size:12px;color:#222">Include Parts List</div>
<div class="a" style="left:389px;top:484px;width:13px;height:13px;border:1px solid #707070;background:#fff"></div>
<div class="t" style="left:406px;top:484px;font-size:12px;color:#222">Allow Ad-hoc Material Collection</div>
<div class="t" style="left:851px;top:422px;font-size:12px;color:#222">Capture Mode:</div>
<div class="a" style="left:933px;top:417px;width:377px;height:21px;border:1px solid #abadb3;background:#fff"></div>
<div class="t" style="left:938px;top:422px;font-size:12px;color:#222">UID</div>
<div class="a" style="left:1293px;top:419px;width:15px;height:17px;border:1px solid #b8b8b8;background:linear-gradient(#f4f4f4,#dedede)"></div>
<svg class="a" style="left:1296px;top:424px" width="9" height="6" viewBox="0 0 9 6"><path d="M1 1L4.5 4.5L8 1" fill="none" stroke="#333" stroke-width="1.4"/></svg>
<div class="t" style="left:389px;top:517px;font-size:12px;color:#222">Selected Materials:</div>
<svg class="a" style="left:515px;top:514px" width="18" height="18" viewBox="0 0 18 18"><rect x="0.5" y="0.5" width="17" height="17" fill="#ececec" stroke="#a6a6a6"/><path d="M8.8 2.5L14.5 5.3V12.5L8.8 15.3L3 12.5V5.3Z" fill="#f4f4f4" stroke="#000" stroke-width="1.1" stroke-linejoin="round"/><path d="M3 5.3L8.8 8.2L14.5 5.3M8.8 8.2V15.3" fill="none" stroke="#000" stroke-width="1"/><circle cx="12.3" cy="12.3" r="2.6" fill="#eee" stroke="#000" stroke-width="1.1"/><path d="M14.2 14.2L16.5 16.5" stroke="#000" stroke-width="1.2"/></svg>
<svg class="a" style="left:537px;top:514px" width="18" height="18" viewBox="0 0 18 18"><rect x="0.5" y="0.5" width="17" height="17" fill="#ececec" stroke="#a6a6a6"/><ellipse cx="6.2" cy="6.5" rx="3.4" ry="1.2" fill="#000"/><rect x="2.8" y="6.5" width="6.8" height="2" fill="#000"/><rect x="2.8" y="9.3" width="6.8" height="2.1" rx="0.8" fill="#000"/><rect x="2.8" y="12.1" width="6.8" height="2.3" rx="0.9" fill="#000"/><rect x="5" y="2.5" width="1.6" height="3" fill="#000"/><path d="M5.5 2.5H12" stroke="#000" stroke-width="1.2" stroke-linecap="round"/><rect x="10.3" y="4.5" width="5" height="2.5" rx="0.8" fill="#000"/><path d="M10.5 8L15 8L12.8 11.2Z" fill="#000"/><path d="M10.5 14.8L15 14.8L12.8 11.2Z" fill="#000"/></svg>
<svg class="a" style="left:559px;top:514px" width="18" height="18" viewBox="0 0 18 18"><rect x="0.5" y="0.5" width="17" height="17" fill="#ececec" stroke="#a6a6a6"/><path d="M8.8 2.5L14.5 5.3V12.5L8.8 15.3L3 12.5V5.3Z" fill="#f4f4f4" stroke="#000" stroke-width="1.1" stroke-linejoin="round"/><path d="M3 5.3L8.8 8.2L14.5 5.3M8.8 8.2V15.3" fill="none" stroke="#000" stroke-width="1"/><circle cx="13.2" cy="13" r="3.3" fill="#000"/><rect x="10.8" y="12.2" width="4.8" height="1.5" fill="#fff"/></svg>
<div class="a" style="left:389px;top:536px;width:921px;height:303px;border:1px solid #d0d0d0;background:#fff"></div>
<div class="a" style="left:642px;top:560px;width:667px;height:26px;background:#dddddd"></div>
<div class="a" style="left:390px;top:560px;width:251px;height:26px;background:#f2f2f2"></div>
<div class="a" style="left:390px;top:559px;width:919px;height:1px;background:#d9d9d9"></div>
<div class="a" style="left:390px;top:586px;width:919px;height:1px;background:#d9d9d9"></div>
<div class="a" style="left:390px;top:613px;width:919px;height:1px;background:#d9d9d9"></div>
<div class="a" style="left:390px;top:640px;width:919px;height:1px;background:#d9d9d9"></div>
<div class="a" style="left:641px;top:537px;width:1px;height:103px;background:#d9d9d9"></div>
<div class="a" style="left:763px;top:537px;width:1px;height:103px;background:#d9d9d9"></div>
<div class="a" style="left:886px;top:537px;width:1px;height:103px;background:#d9d9d9"></div>
<div class="a" style="left:1008px;top:537px;width:1px;height:103px;background:#d9d9d9"></div>
<div class="a" style="left:1158px;top:537px;width:1px;height:103px;background:#d9d9d9"></div>
<div class="t" style="left:394px;top:543px;font-size:12px;color:#222">Part Number</div>
<div class="t" style="left:646px;top:543px;font-size:12px;color:#222">Description</div>
<div class="t" style="left:768px;top:543px;font-size:12px;color:#222">Quantity</div>
<div class="t" style="left:891px;top:543px;font-size:12px;color:#222">Unit of Issue</div>
<div class="t" style="left:1013px;top:543px;font-size:12px;color:#222">Revision</div>
<div class="t" style="left:1163px;top:543px;font-size:12px;color:#222">Revision Mode</div>
<div class="t" style="left:394px;top:568px;font-size:12px;color:#222;letter-spacing:0.1px">Part Number from Batch Attribute 'Height'</div>
<div class="t" style="left:646px;top:568px;font-size:12px;color:#222">Description from P...</div>
<div class="t" style="left:769px;top:568px;font-size:12px;color:#222">1</div>
<div class="a" style="left:887px;top:560px;width:116px;height:26px;overflow:hidden"><div class="t" style="left:4px;top:8px;font-size:12px;color:#222">Unit from Part for Batch</div></div>
<div class="t" style="left:1164px;top:568px;font-size:12px;color:#222">Use Any</div>
<div class="t" style="left:394px;top:595px;font-size:12px;color:#222;letter-spacing:0.1px">Part Number from Batch Attribute 'Length'</div>
<div class="t" style="left:646px;top:595px;font-size:12px;color:#222">Description from P...</div>
<div class="t" style="left:769px;top:595px;font-size:12px;color:#222">1</div>
<div class="a" style="left:887px;top:587px;width:116px;height:26px;overflow:hidden"><div class="t" style="left:4px;top:8px;font-size:12px;color:#222">Unit from Part for Batch</div></div>
<div class="t" style="left:1164px;top:595px;font-size:12px;color:#222">Use Any</div>
<div class="t" style="left:394px;top:622px;font-size:12px;color:#222;letter-spacing:0.1px">Part Number from Batch Attribute 'Width'</div>
<div class="t" style="left:646px;top:622px;font-size:12px;color:#222">Description from P...</div>
<div class="t" style="left:769px;top:622px;font-size:12px;color:#222">1</div>
<div class="a" style="left:887px;top:614px;width:116px;height:26px;overflow:hidden"><div class="t" style="left:4px;top:8px;font-size:12px;color:#222">Unit from Part for Batch</div></div>
<div class="t" style="left:1164px;top:622px;font-size:12px;color:#222">Use Any</div>
<div class="a" style="left:1141px;top:561px;width:15px;height:24px;border:1px solid #acacac;background:linear-gradient(#f2f2f2,#e2e2e2)"></div>
<svg class="a" style="left:1144px;top:570px" width="9" height="6" viewBox="0 0 9 6"><path d="M1 1L4.5 4.5L8 1" fill="none" stroke="#c0c0c0" stroke-width="1.1"/></svg>
<div class="a" style="left:1141px;top:588px;width:15px;height:24px;border:1px solid #acacac;background:linear-gradient(#f2f2f2,#e2e2e2)"></div>
<svg class="a" style="left:1144px;top:597px" width="9" height="6" viewBox="0 0 9 6"><path d="M1 1L4.5 4.5L8 1" fill="none" stroke="#c0c0c0" stroke-width="1.1"/></svg>
<div class="a" style="left:1141px;top:615px;width:15px;height:24px;border:1px solid #acacac;background:linear-gradient(#f2f2f2,#e2e2e2)"></div>
<svg class="a" style="left:1144px;top:624px" width="9" height="6" viewBox="0 0 9 6"><path d="M1 1L4.5 4.5L8 1" fill="none" stroke="#c0c0c0" stroke-width="1.1"/></svg>
<div class="a" style="left:1243px;top:872px;width:75px;height:22px;border:1px solid #8f8f8f;background:linear-gradient(#f4f4f4,#e4e4e4)"></div>
<div class="t" style="left:1243px;width:75px;text-align:center;top:877px;font-size:12px;color:#222">OK</div>
<div class="a" style="left:342px;top:499px;width:2px;height:1px;background:#8a8a8a"></div>
<div class="a" style="left:342px;top:501px;width:2px;height:1px;background:#8a8a8a"></div>
<div class="a" style="left:342px;top:503px;width:2px;height:1px;background:#8a8a8a"></div>
<div class="a" style="left:342px;top:505px;width:2px;height:1px;background:#8a8a8a"></div>
<div class="a" style="left:342px;top:507px;width:2px;height:1px;background:#8a8a8a"></div>
<div class="a" style="left:342px;top:509px;width:2px;height:1px;background:#8a8a8a"></div>
<div class="a" style="left:342px;top:511px;width:2px;height:1px;background:#8a8a8a"></div>
<div class="a" style="left:342px;top:513px;width:2px;height:1px;background:#8a8a8a"></div>
<div class="a" style="left:1332px;top:251px;width:1px;height:653px;background:#d0d8dd"></div></body></html>
